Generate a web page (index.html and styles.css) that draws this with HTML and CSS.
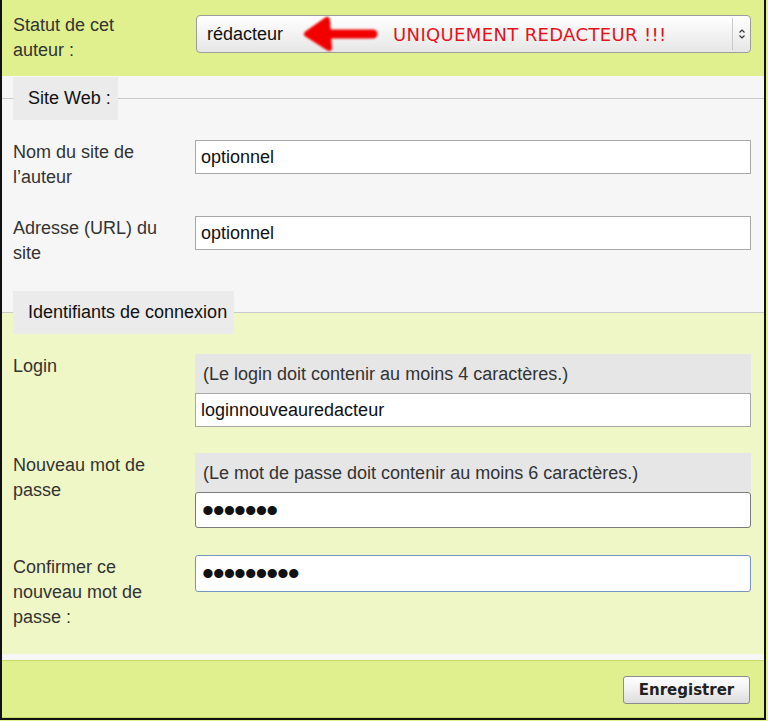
FILE: index.html
```html
<!DOCTYPE html>
<html>
<head>
    <meta charset="utf-8">
    <title>Auteur</title>
    <link rel="stylesheet" href="styles.css">
</head>
<body>
    <div class="frame">
        <div class="row status">
            <label class="lbl" for="statut">Statut de cet auteur :</label>
            <div class="select" id="statut">
                <span class="value">rédacteur</span>
                <svg class="arrow" width="78" height="36" viewBox="0 0 78 36">
                    <defs>
                        <filter id="soft" x="-20%" y="-40%" width="140%" height="180%">
                            <feGaussianBlur stdDeviation="1.3"/>
                        </filter>
                    </defs>
                    <g filter="url(#soft)" stroke="#f20000" fill="#f20000" stroke-linecap="round" stroke-linejoin="round">
                        <path d="M5 18 L25 4 L27 32 Z" stroke-width="6"/>
                        <path d="M10 18 L71 18" stroke-width="9"/>
                    </g>
                </svg>
                <span class="warn">UNIQUEMENT REDACTEUR !!!</span>
                <span class="spin">
                    <svg width="8" height="12" viewBox="0 0 8 12">
                        <path d="M1.5 4.5 L4 2 L6.5 4.5 M1.5 7.5 L4 10 L6.5 7.5" fill="none" stroke="#333" stroke-width="1.2"/>
                    </svg>
                </span>
            </div>
        </div>

        <div class="panel">
            <fieldset class="group web">
                <legend>Site Web :</legend>
                <div class="rows">
                    <div class="row">
                        <label class="lbl" for="nom_site">Nom du site de l’auteur</label>
                        <div class="field"><input class="text" id="nom_site" type="text" value="optionnel"></div>
                    </div>
                    <div class="row">
                        <label class="lbl" for="url_site">Adresse (URL) du site</label>
                        <div class="field"><input class="text" id="url_site" type="text" value="optionnel"></div>
                    </div>
                </div>
            </fieldset>

            <fieldset class="group ident">
                <legend>Identifiants de connexion</legend>
                <div class="rows">
                    <div class="row">
                        <label class="lbl" for="login">Login</label>
                        <div class="field">
                            <div class="note">(Le login doit contenir au moins 4 caractères.)</div>
                            <input class="text" id="login" type="text" value="loginnouveauredacteur">
                        </div>
                    </div>
                    <div class="row">
                        <label class="lbl" for="pass">Nouveau mot de passe</label>
                        <div class="field">
                            <div class="note">(Le mot de passe doit contenir au moins 6 caractères.)</div>
                            <input class="pw" id="pass" type="password" value="abcdefg">
                        </div>
                    </div>
                    <div class="row last">
                        <label class="lbl" for="pass2">Confirmer ce nouveau mot de passe :</label>
                        <div class="field">
                            <input class="pw active" id="pass2" type="password" value="abcdefghi">
                        </div>
                    </div>
                </div>
            </fieldset>
        </div>

        <div class="actions">
            <button type="submit" class="save">Enregistrer</button>
        </div>
    </div>
</body>
</html>
```
FILE: styles.css
```css
body {
    margin: 0;
    background: #e0f08f;
    font-family: "Liberation Sans", Arial, sans-serif;
    font-size: 18px;
    color: #333;
}
.frame {
    width: 762px;
    border: 2px solid #111;
    border-top: none;
}
.row {
    display: grid;
    grid-template-columns: 150px 1fr;
    column-gap: 32px;
    align-items: start;
}
.lbl {
    line-height: 25px;
    color: #333;
}

/* statut */
.status {
    background: #e0f08f;
    padding: 13px 13px 13px 11px;
}
.select {
    margin: 2px 0 0 1px;
    height: 38px;
    box-sizing: border-box;
    border: 1px solid #9c9c9c;
    border-radius: 4px;
    background: linear-gradient(#ffffff, #f3f3f3 50%, #e6e6e6);
    display: flex;
    align-items: center;
}
.select .value {
    padding-left: 10px;
    color: #111;
}
.arrow {
    margin-left: 19px;
}
.warn {
    margin-left: 13px;
    font-family: "DejaVu Sans", Verdana, sans-serif;
    font-size: 18px;
    letter-spacing: 0.35px;
    color: #e3121b;
    flex: 1;
}
.spin {
    align-self: stretch;
    width: 17px;
    margin: 2px 0;
    border-left: 1px solid #c9c9c9;
    display: flex;
    align-items: center;
    justify-content: center;
}

/* panneaux */
.panel {
    background: #f6f6f6;
    padding: 1px 0 6px;
}
.group {
    margin: 0;
    min-width: 0;
    border: none;
    border-top: 1px solid #c9c9c9;
    padding: 20px 13px 25px 11px;
}
.group legend {
    padding: 0 7px 0 15px;
    line-height: 43px;
    background: #ebebeb;
    color: #111;
}
.web {
    background: #f6f6f6;
}
.ident {
    background: #f0f7c6;
    padding-bottom: 24px;
}
.rows {
    display: flex;
    flex-direction: column;
    gap: 26px;
}
.rows .last {
    margin-top: 1px;
}
.field {
    display: flex;
    flex-direction: column;
}
.note {
    height: 39px;
    line-height: 41px;
    padding-left: 8px;
    background: #e6e6e6;
    color: #333;
}
.text {
    width: 100%;
    height: 34px;
    box-sizing: border-box;
    margin: 0;
    padding: 0 5px;
    border: 1px solid #a8a8a8;
    background: #fff;
    font: 18px "Liberation Sans", Arial, sans-serif;
    color: #111;
}
.pw {
    width: 100%;
    height: 36px;
    box-sizing: border-box;
    margin: 0;
    padding: 0 6px;
    border: 1px solid #7b7b7b;
    border-radius: 3px;
    background: #fff;
    font: 34px "Liberation Sans", Arial, sans-serif;
    letter-spacing: -1.2px;
    color: #111;
}
.pw.active {
    border-color: #7595c2;
    height: 37px;
}
input:focus {
    outline: none;
}

/* pied */
.actions {
    background: #e0f08f;
    border-top: 1px solid #c9da5e;
    border-bottom: 1px solid #c9da5e;
    display: flex;
    justify-content: flex-end;
    align-items: flex-start;
    padding: 15px 14px 0 0;
    box-sizing: content-box;
    height: 41px;
}
.save {
    width: 127px;
    height: 28px;
    border: 1px solid #8c8c8c;
    border-radius: 3px;
    background: linear-gradient(#ffffff, #f0f0f0 50%, #dcdcdc);
    font: bold 15px "DejaVu Sans", Verdana, sans-serif;
    color: #222;
    padding: 0;
}
```
